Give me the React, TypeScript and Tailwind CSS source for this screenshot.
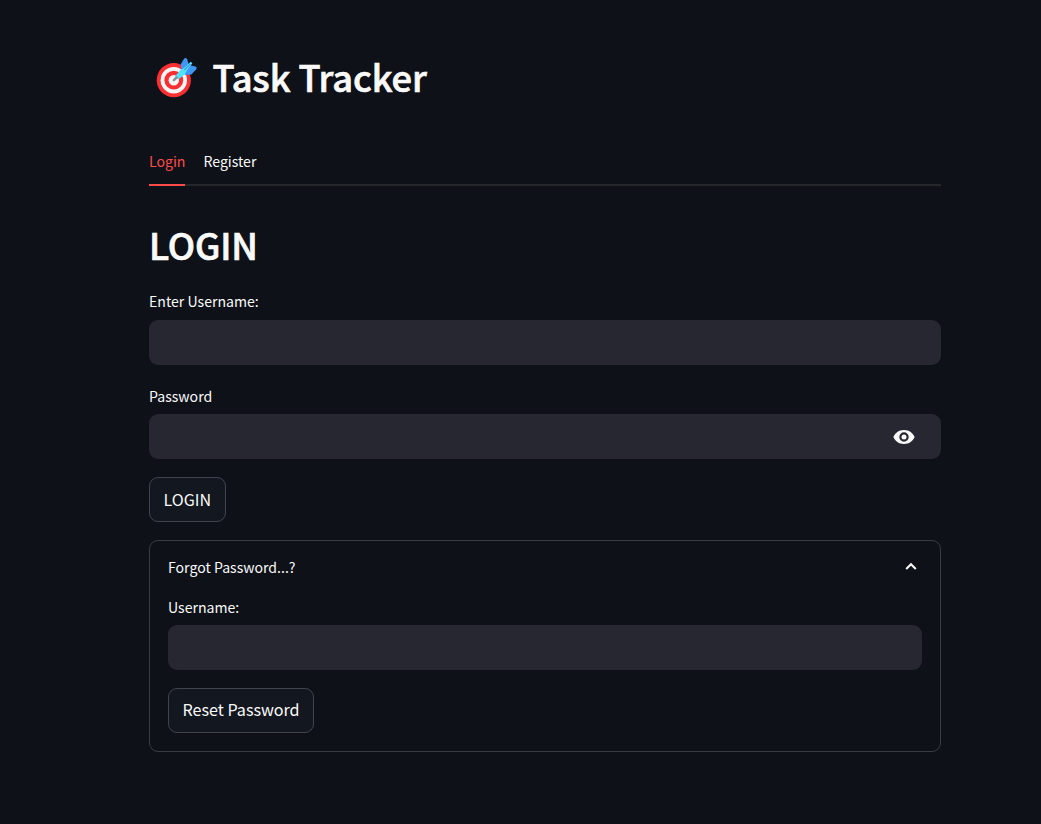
import React, { useState } from "react";

function Target() {
  return (
    <svg width="42" height="42" viewBox="0 0 42 42" aria-hidden="true">
      <circle cx="18.8" cy="23.2" r="17.1" fill="#f92f32" />
      <circle cx="18.8" cy="23.2" r="13.2" fill="#f4f4f4" />
      <circle cx="18.8" cy="23.2" r="9.4" fill="#f92f32" />
      <circle cx="18.8" cy="23.2" r="5.2" fill="#f4f4f4" />
      <path d="M27 15 25.6 7.500 29.200 1.400Q31.300.2 32.100 2.200L34 8Z" fill="#3f96f5" />
      <path d="M28 15 34.500 8.300 40.500 9.600Q42.200 10.400 41.200 12.200L36.400 17.400 30 18Z" fill="#3f96f5" />
      <path d="M20.400 19 25.200 13.200 29.800 10.200 35.800 4.800 37.400 6.300 32.300 13 29.600 17.600 24.200 21.800Q19.400 23.400 20.400 19Z" fill="#50e2ff" />
      <path d="M29.400 13 35.400 7" stroke="#3f96f5" strokeWidth="1.200" />
      <path d="M18.900 23.100 21.600 20.400" stroke="#889096" strokeWidth="2.400" strokeLinecap="round" />
    </svg>
  );
}

function Field({
  label,
  password = false,
  labelClass = "",
}: {
  label: string;
  password?: boolean;
  labelClass?: string;
}) {
  const [visible, setVisible] = useState(false);
  return (
    <label className="flex flex-col">
      <span className={"mb-[5px] h-[27px] text-[14.1px] leading-[27px] " + labelClass}>{label}</span>
      <span className="flex h-[45px] items-center rounded-[9px] bg-[#262730] pr-[25px]">
        <input
          type={password && !visible ? "password" : "text"}
          className="h-full min-w-0 flex-1 bg-transparent px-3 outline-none"
        />
        {password && (
          <button type="button" aria-label="Show password" onClick={() => setVisible(!visible)}>
            <svg width="24" height="24" viewBox="0 0 24 24" fill="#fafafa">
              <path
                fillRule="evenodd"
                d="M12 5C7 5 3 7.8 1.4 12c1.6 4.2 5.6 7 10.6 7s9-2.8 10.6-7C21 7.8 17 5 12 5zM12 16.7a4.7 4.7 0 1 1 0-9.4 4.7 4.7 0 0 1 0 9.4zM12 9.5a2.5 2.5 0 1 0 0 5 2.5 2.5 0 0 0 0-5z"
              />
            </svg>
          </button>
        )}
      </span>
    </label>
  );
}

function Button({ children, className = "leading-[27px]" }: { children: React.ReactNode; className?: string }) {
  return (
    <button
      className={
        "mt-[18px] flex h-[45px] items-center self-start rounded-[9px] border border-[#41444c] bg-[#131720] px-[13.5px] text-[16.1px] " +
        className
      }
    >
      {children}
    </button>
  );
}

export default function App() {
  return (
    <main className="min-h-[824px] bg-[#0e1117] pl-[149px] pr-[100px] pt-[50px] font-['Noto_Sans_CJK_SC','Noto_Sans_CJK_JP',sans-serif] text-[#fafafa]">
      <h1 className="flex h-[56px] items-center pl-[6.2px] text-[36.25px] leading-[56px] font-medium">
        <Target />
        <span className="ml-[15.3px] pb-[4px] tracking-[-0.12px] [-webkit-text-stroke:0.7px_#fafafa]">Task Tracker</span>
      </h1>
      <nav className="mt-[33px] flex h-[47px] gap-[18px] border-b-2 border-[#26272b] text-[14.1px]">
        <button className="mb-[-2px] h-[47px] border-b-2 border-[#ff4b4b] text-[#ff4b4b]">Login</button>
        <button className="mb-[-2px] h-[47px] border-b-2 border-transparent">Register</button>
      </nav>
      <section className="flex flex-col pt-[30px]">
        <h2 className="h-[56px] text-[36.25px] leading-[56px] font-medium tracking-[-0.2px] [-webkit-text-stroke:0.7px_#fafafa]">
          LOGIN
        </h2>
        <div className="mt-[16px]"><Field label="Enter Username:" /></div>
        <div className="mt-[17px]"><Field label="Password" password labelClass="pt-px" /></div>
        <Button>LOGIN</Button>
        <section className="mt-[18px] flex h-[212px] flex-col rounded-[9px] border border-[#3a3c42] px-[18px]">
          <header className="flex h-[52px] items-center justify-between text-[14.1px]">
            <span className="pt-[2px]">Forgot Password...?</span>
            <svg className="mr-[2px]" width="18" height="18" viewBox="0 0 18 18" fill="none" stroke="#fafafa" strokeWidth="2">
              <path d="m4.2 11 4.8-4.8 4.8 4.8" />
            </svg>
          </header>
          <Field label="Username:" labelClass="pt-px" />
          <Button className="pb-[2px] leading-[27px]">Reset Password</Button>
        </section>
      </section>
    </main>
  );
}
